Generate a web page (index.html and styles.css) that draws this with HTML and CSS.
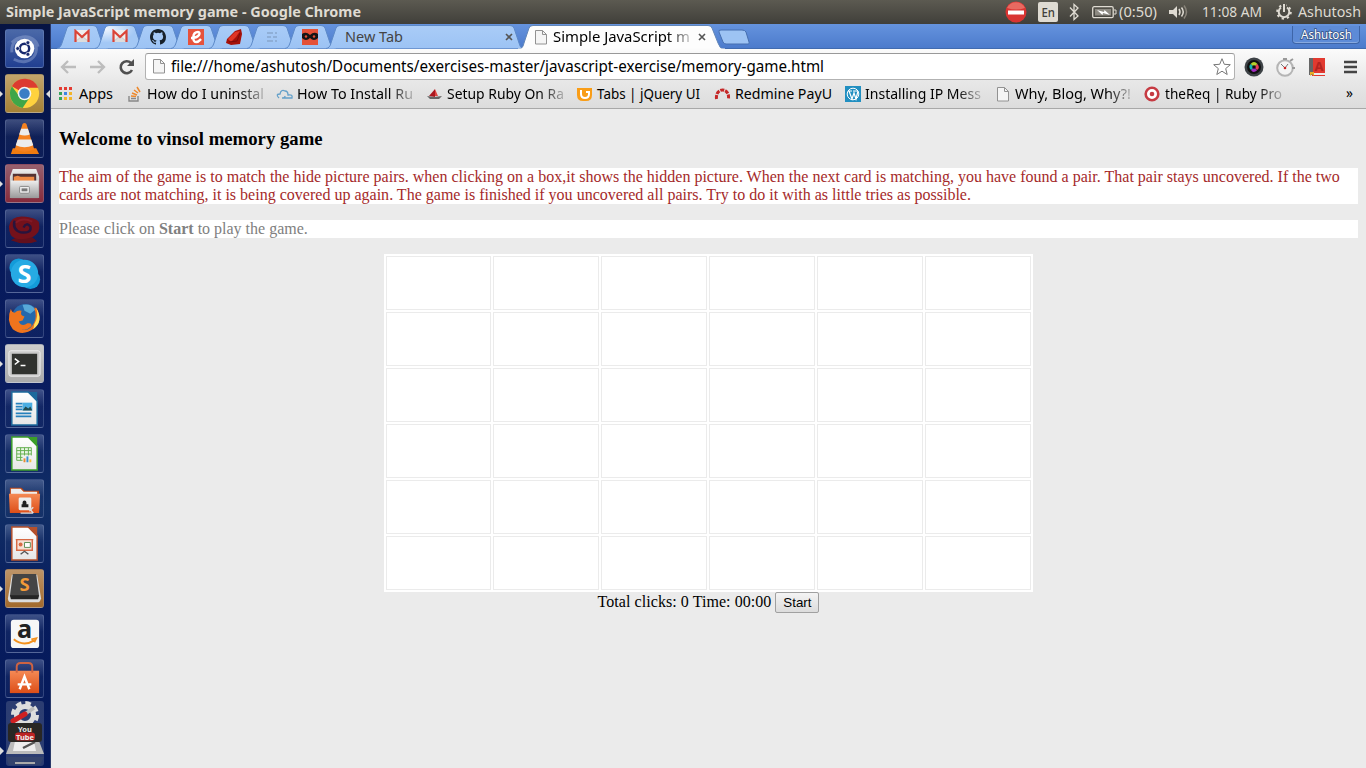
FILE: index.html
```html
<!DOCTYPE html>
<html lang="en">
<head>
<meta charset="utf-8">
<title>Simple JavaScript memory game</title>
<link rel="stylesheet" href="styles.css">
</head>
<body>
<svg width="0" height="0" class="defs">
  <defs>
    <linearGradient id="tabFill" x1="0" y1="0" x2="0" y2="1"><stop offset="0" stop-color="#aaccf7"/><stop offset="1" stop-color="#9cc3f4"/></linearGradient>
    <radialGradient id="litFill" cx=".2" cy=".15" r=".6"><stop offset="0" stop-color="#f0f6fe"/><stop offset="1" stop-color="#a3c8f5"/></radialGradient>
    <linearGradient id="pageFill" x1="0" y1="0" x2="0" y2="1"><stop offset="0" stop-color="#fff"/><stop offset="1" stop-color="#e6e6e6"/></linearGradient>
    <linearGradient id="orangeFill" x1="0" y1="0" x2="0" y2="1"><stop offset="0" stop-color="#f58a55"/><stop offset="1" stop-color="#dd4e18"/></linearGradient>
    <linearGradient id="greyFill" x1="0" y1="0" x2="0" y2="1"><stop offset="0" stop-color="#eee"/><stop offset="1" stop-color="#999"/></linearGradient>
    <symbol id="tab" viewBox="0 0 52 25"><path d="M0 24.500C3 24 4 22 5 19L10 4Q11 1.500 14 1.500H36Q39 1.500 40 4L45 19Q47 24 51 24.500" stroke="#5d8ac9"/></symbol>
    <symbol id="page" viewBox="0 0 12 15"><path d="M.5.5h7l4 4v9.500H.5z" fill="#f5f5f5" stroke="#929292"/><path d="M7.500.5v4h4" fill="none" stroke="#929292"/></symbol>
    <symbol id="gmail" viewBox="0 0 16 14"><path d="M1 1h14v12H1z" fill="#eee"/><path d="M1 13l7-6 7 6" fill="#ddd" stroke="#c8c8c8"/><path d="M1.500 13V2L8 8l6.500-6v11" fill="none" stroke="#db4437" stroke-width="2.200"/></symbol>
    <symbol id="doc" viewBox="0 0 28 36"><path d="M1 1h17l9 9v25H1z" fill="url(#pageFill)" stroke="currentColor" stroke-width="1.500"/><path d="M17 1h10v10z" fill="currentColor"/></symbol>
  </defs>
</svg>

<header class="panel">
  <svg width="356" height="24"><text class="title" x="0" y="17" textLength="355" lengthAdjust="spacingAndGlyphs">Simple JavaScript memory game - Google Chrome</text></svg>
  <div class="tray">
    <svg width="22" height="24"><circle cx="11" cy="12" r="10.500" fill="#d93432"/><path d="M2 8a10 10 0 0 1 18 0Q11 11 2 8" fill="#e86a61"/><rect x="3" y="10.500" width="16" height="4" fill="#fff"/></svg>
    <svg width="20" height="24"><rect y="2" width="20" height="20" rx="2" fill="#dfdbd2"/><text x="3.500" y="17" class="lang" textLength="13.500" lengthAdjust="spacingAndGlyphs">En</text></svg>
    <svg width="11" height="24"><path d="M1 7.500l8 8.500-4 3.500v-15L9 8l-8 8.500" fill="none" stroke="#dfdbd2" stroke-width="1.300"/></svg>
    <svg width="25" height="24"><rect x=".7" y="6.700" width="20.500" height="11" rx="1.500" fill="none" stroke="#dfdbd2" stroke-width="1.300"/><rect x="3" y="9" width="16" height="6.500" fill="#8d8a82"/><path d="M22 10h2v4h-2" fill="none" stroke="#dfdbd2"/><path d="M5 10l7 2 .5-2 5.500 5-7-2-.5 2z" fill="#fff"/></svg>
    <svg width="39" height="24"><text y="17" class="paneltext" textLength="38" lengthAdjust="spacingAndGlyphs">(0:50)</text></svg>
    <svg width="21" height="24"><path d="M1 10h4l4-4v12l-4-4H1z" fill="#dfdbd2"/><path d="M11 9q2 3 0 6M13.500 7.500q3.500 4.500 0 9" fill="none" stroke="#dfdbd2" stroke-width="1.500"/><path d="M16 5.500q5 6.500 0 13" fill="none" stroke="#888379" stroke-width="1.500"/></svg>
    <svg width="61" height="24"><text y="17" class="paneltext" textLength="60" lengthAdjust="spacingAndGlyphs">11:08 AM</text></svg>
    <svg width="16" height="24"><path d="M5 7.500a5.300 5.300 0 1 0 6 0" fill="none" stroke="#dfdbd2" stroke-width="2"/><circle cx="8" cy="12" r="6.800" fill="none" stroke="#dfdbd2" stroke-width="2" stroke-dasharray="2.300 3.040"/><path d="M8 4v8" stroke="#504e47" stroke-width="4"/><path d="M8 4v8" stroke="#dfdbd2" stroke-width="2"/></svg>
    <svg width="64" height="24"><text y="17" class="paneltext" textLength="63" lengthAdjust="spacingAndGlyphs">Ashutosh</text></svg>
  </div>
</header>

<div class="desktop">
<nav class="launcher">
  <div class="app dash"><svg viewBox="0 0 38 38"><path d="M6 23C4 5 29 1 33 17M8 30c18 9 29-8 20-20M6 13C14 4 28 5 31 22" fill="none" stroke="#a5b7df" stroke-width="3" opacity=".4"/><circle cx="19" cy="19" r="10" fill="#fff"/><circle cx="19" cy="19" r="4.800" fill="none" stroke="#17296e" stroke-width="2.500"/><g fill="#17296e" stroke="#fff" stroke-width=".7"><circle cx="12" cy="19" r="2"/><circle cx="22.500" cy="13" r="2"/><circle cx="22.500" cy="25" r="2"/></g></svg></div>
  <div class="app chrome run focus"><svg viewBox="0 0 38 38"><circle cx="19" cy="19" r="15" fill="#ffd23e"/><path d="M19 19L6 11.500A15 15 0 0 1 33 13H19z" fill="#dc3b30"/><path d="M19 19l-5 3L6 11.500A15 15 0 0 0 17 33.800L25 22z" fill="#3fa648"/><circle cx="19" cy="19" r="7" fill="#f4f4f4"/><circle cx="19" cy="19" r="5.400" fill="#3b7dc5"/></svg></div>
  <div class="app"><svg viewBox="0 0 38 38"><path d="M7 29h24l3 6H5z" fill="#f07c10"/><path d="M17 4q2-2 4 0l8 26q-10 5-20 0z" fill="#f58220"/><path d="M15.500 9h7l2 6q-5 2-11 0zM12 20h14l2 6q-9 4-18 0z" fill="#ececec"/></svg></div>
  <div class="app files run"><svg viewBox="0 0 38 38"><path d="M7 4h24l3 8v22H4V12z" fill="url(#greyFill)"/><path d="M7 9h24v8H7z" fill="#533"/><path d="M8 12l4-1 3 1h14v5H8z" fill="#f08b45"/><path d="M5 16h28v18H5z" fill="url(#greyFill)"/><rect x="14" y="22" width="10" height="7" rx="1" fill="#eee" stroke="#888"/><rect x="16" y="24" width="6" height="3" fill="#777"/></svg></div>
  <div class="app"><svg viewBox="0 0 38 38"><path d="M5 31q14 6 27 1l-5-4H11z" fill="#62101d"/><path d="M3 17Q5 5 20 7t14 8q2 8-7 13-16 5-22-2-2-4-2-9z" fill="#74111b"/><path d="M9 11q-3 9 6 12 12 1 10-6-4-5-7 1" fill="none" stroke="#28143d" stroke-width="2.500"/><path d="M10 13q7-6 17-1" fill="none" stroke="#841926" stroke-width="2"/></svg></div>
  <div class="app"><svg viewBox="0 0 38 38"><circle cx="13" cy="13" r="9.500" fill="#139bd9"/><circle cx="25" cy="25" r="10" fill="#139bd9"/><circle cx="19" cy="19" r="14" fill="#26aae4"/><text x="19" y="28.500" class="skype">S</text></svg></div>
  <div class="app"><svg viewBox="0 0 38 38"><circle cx="20" cy="18" r="14" fill="#2568ac"/><path d="M17 5q9-2 13 5l-5 4-6-3z" fill="#58a9d8"/><path d="M31 8q8 13-2 21-12 9-22 1-7-9-2-21 1 4 4 4 3-3 7-2-2 5 3 6l-2 4-4 1q3 6 9 2 5-1 4 3-6 6-13 1 10 7 16-5 3-6 0-15z" fill="#ef741d"/><path d="M31 8q8 14-3 22l1-5q5-8 2-17" fill="#ffe25e"/></svg></div>
  <div class="app terminal run"><svg viewBox="0 0 38 38"><rect x="3" y="6" width="32" height="26" rx="2" fill="#c9c9c9" stroke="#eee"/><rect x="6" y="9" width="26" height="21" fill="#30322f"/><path d="M9 14l4 3-4 3M15 21h5" fill="none" stroke="#fff" stroke-width="1.500"/></svg></div>
  <div class="app"><svg viewBox="0 0 38 38"><use href="#doc" x="5" y="1" width="28" height="36" color="#1d699c"/><path d="M10 14h7M10 17h7M10 20h7M10 24h16M10 27h16" stroke="#2681bd" stroke-width="1.800"/><path d="M17 13h10v8H17z" fill="#4baee2"/><path d="M17 21l3-4 3 2 2-2 2 4z" fill="#224c50"/></svg></div>
  <div class="app"><svg viewBox="0 0 38 38"><use href="#doc" x="5" y="1" width="28" height="36" color="#3b9f28"/><path d="M11 13h15v13H11zM11 16h15M11 19.500h15M11 23h15M15 13v13M19 13v13M23 13v13" fill="#eaf6e5" stroke="#65af50"/><path d="M17 21h10v8H17z" fill="#eee"/><path d="M18 24h2v4h-2z" fill="#e78a32"/><path d="M21 22h2v6h-2z" fill="#3c91cf"/><path d="M24 25h2v3h-2z" fill="#f5c03d"/></svg></div>
  <div class="app"><svg viewBox="0 0 38 38"><path d="M4 8h12l3 3h15v20H4z" fill="#b94314"/><path d="M5 9h10l3 3h14v5H5z" fill="#eee"/><path d="M3 14h32l-1 20H4z" fill="url(#orangeFill)"/><rect x="13" y="18" width="13" height="13" rx="1.500" fill="#eee"/><path d="M17 25v-2q0-2 2-2t2 2v2zM16 25h7v3h-7z" fill="#222"/><path d="M15 34h13m-4-5l4 5m0-6l-4 4" stroke="#ddd" stroke-width="1.500"/></svg></div>
  <div class="app"><svg viewBox="0 0 38 38"><use href="#doc" x="5" y="1" width="28" height="36" color="#b5502b"/><path d="M11 15h16v11H11zM10 15h18" fill="#f6dfd4" stroke="#d76a44" stroke-width="1.500"/><path d="M15 30l4-3 4 3" fill="none" stroke="#555" stroke-width="1.500"/><circle cx="15" cy="20" r="2" fill="#d76a44"/><path d="M19 18h6v5h-6z" fill="#fff" stroke="#5b8e55"/></svg></div>
  <div class="app sublime run"><svg viewBox="0 0 38 38"><path d="M6 5h26l4 24q-1 4-3 4H5q-3 0-3-4z" fill="#ddd"/><path d="M7 4h24l3 23H4z" fill="#454545"/><path d="M4 26h30l-1 4H5z" fill="#252525"/><text x="19" y="22" class="subl">S</text></svg></div>
  <div class="app"><svg viewBox="0 0 38 38"><rect x="5" y="5" width="29" height="29" rx="3" fill="#f7f7f7"/><text x="19" y="24" class="amazon">a</text><path d="M8 25q10 8 21 1M26 25l5-1-2 4" fill="none" stroke="#f4921e" stroke-width="2"/></svg></div>
  <div class="app"><svg viewBox="0 0 38 38"><path d="M4 11h30v23H4z" fill="url(#orangeFill)"/><path d="M11 13V7q0-4 4-4h8q4 0 4 4v6" fill="none" stroke="#ce6342" stroke-width="2"/><path d="M14 30l5-13 5 13M12 25h14" fill="none" stroke="#fff" stroke-width="2.500"/></svg></div>
  <svg class="stack" viewBox="0 0 50 67"><rect x="6" y="0" width="38" height="65" rx="3" fill="#40507e" opacity=".65"/><circle cx="25" cy="14" r="12" fill="none" stroke="#ddd" stroke-width="4" stroke-dasharray="5.500 3.920"/><circle cx="25" cy="14" r="8.500" fill="none" stroke="#ddd" stroke-width="5"/><path d="M14 20L34 7" stroke="#b9b9b9" stroke-width="3.500"/><path d="M13 20L25 13" stroke="#cf2021" stroke-width="5" stroke-linecap="round"/><path d="M11 40h28l5 13H6z" fill="#bbb"/><path d="M15 40h19l2 10H13z" fill="#eee"/><path d="M23 47l12-6" stroke="#555" stroke-width="2.500"/><rect x="8" y="22" width="34" height="19" rx="3" fill="#292724"/><text x="25" y="30.500" class="yt">You</text><rect x="15" y="31.500" width="20" height="8" rx="3" fill="#bc2424"/><text x="25" y="38.500" class="yt">Tube</text><path d="M6 56h38l-4 8H9z" fill="#34436d"/><path d="M15 61h20v2H15z" fill="#aaa"/><path d="M0 46l4 4-4 4z" fill="#ddd"/></svg>
</nav>

<div class="browser">
  <div class="tabs">
    <div class="tab"><svg class="shape"><use href="#tab" width="52" height="25"/></svg><svg class="fav"><use href="#gmail" width="16" height="14"/></svg></div>
    <div class="tab lit"><svg class="shape"><use href="#tab" width="52" height="25"/></svg><svg class="fav"><use href="#gmail" width="16" height="14"/></svg></div>
    <div class="tab"><svg class="shape"><use href="#tab" width="52" height="25"/></svg><svg class="fav" viewBox="0 0 16 16"><path fill="#17212b" d="M8 0C3.580 0 0 3.580 0 8c0 3.540 2.290 6.530 5.470 7.590.4.070.55-.17.55-.38v-1.490c-2.010.37-2.530-.49-2.690-.94-.09-.23-.48-.94-.82-1.130-.28-.15-.68-.52-.01-.53.63-.01 1.080.58 1.230.82.72 1.210 1.870.87 2.330.66.07-.52.28-.87.51-1.070-1.780-.2-3.640-.89-3.640-3.950 0-.87.31-1.590.82-2.150-.08-.2-.36-1.020.08-2.120 0 0 .67-.21 2.200.82a7.420 7.420 0 0 1 4 0c1.530-1.040 2.200-.82 2.200-.82.44 1.100.16 1.920.08 2.120.51.56.82 1.270.82 2.150 0 3.070-1.870 3.750-3.650 3.950.29.25.54.73.54 1.480v2.200c0 .21.15.46.55.38A8 8 0 0 0 16 8c0-4.420-3.580-8-8-8"/></svg></div>
    <div class="tab"><svg class="shape"><use href="#tab" width="52" height="25"/></svg><svg class="fav" viewBox="0 0 16 16"><rect width="16" height="16" fill="#e6523d"/><path d="M3 9c9 0 10-6 7-6-6 0-6 10-2 10 3 0 4-2 5-3" fill="none" stroke="#fff" stroke-width="2.400"/></svg></div>
    <div class="tab"><svg class="shape"><use href="#tab" width="52" height="25"/></svg><svg class="fav" viewBox="0 0 16 16"><path d="M1 10l8-8 6-2 1 5-2 10-9 1-5-2z" fill="#a51109"/><path d="M2 10l7-7 5-1-4 6-5 5z" fill="#df3526"/><path d="M3 13l8-1 3-8" fill="none" stroke="#7c0b0b"/></svg></div>
    <div class="tab"><svg class="shape"><use href="#tab" width="52" height="25"/></svg><svg class="fav" viewBox="0 0 16 16"><path d="M3 4h6M11 4h2M3 8h4M9 8h4M3 12h6M11 12h2" stroke="#88a7cd" stroke-width="1.500"/></svg></div>
    <div class="tab"><svg class="shape"><use href="#tab" width="52" height="25"/></svg><svg class="fav" viewBox="0 0 16 16"><rect width="16" height="16" fill="#e45037"/><path d="M0 5q4-3 8 1 4-4 8-1v4q-4 4-8 0-4 4-8 0z" fill="#151515"/><circle cx="4" cy="7.500" r="1.200" fill="#e45037"/><circle cx="12" cy="7.500" r="1.200" fill="#e45037"/></svg></div>
    <div class="tab wide"><svg class="shape"><path d="M4 24.500Q8 24 9 19L14 4Q15 1.500 18 1.500H188Q191 1.500 192 4l5 15q1 5 4 5.500" stroke="#5d8ac9"/></svg><svg width="59" height="24"><text y="17" class="tabtext dim" textLength="58" lengthAdjust="spacingAndGlyphs">New Tab</text></svg><svg class="close" viewBox="0 0 8 8"><path d="M1 1l6 6M7 1L1 7" stroke="#555" stroke-width="1.600"/></svg></div>
    <div class="tab active"><svg class="shape" width="208" height="26"><path d="M0 25.500Q5 25 6 19L11 4Q12 1.500 15 1.500H190Q193 1.500 194 4l6 15q2 6 6 6.500" fill="#fdfdfd" stroke="#6286b8"/><path d="M0 25.500h207" stroke="#fbfbfb" stroke-width="2"/></svg><svg width="12" height="15"><use href="#page" width="12" height="15"/></svg><svg class="fade" width="138" height="24"><text y="17" class="tabtext" textLength="137" lengthAdjust="spacingAndGlyphs">Simple JavaScript m</text></svg><svg class="close" viewBox="0 0 8 8"><path d="M1 1l6 6M7 1L1 7" stroke="#555" stroke-width="1.600"/></svg></div>
    <svg class="plus" width="33" height="17"><path d="M1 3Q0 1 3 1h21q3 0 4 2l3 10q1 2-1 2H8q-2 0-3-2z" fill="#9dc3f3" stroke="#466fb0"/></svg>
    <div class="profile"><svg width="52" height="18"><text y="13" class="proftext" textLength="51" lengthAdjust="spacingAndGlyphs">Ashutosh</text></svg></div>
  </div>

  <div class="toolbar">
    <svg width="17" height="18"><path d="M8 3L2 9l6 6M2 9h14" fill="none" stroke="#bdbdbd" stroke-width="2.300"/></svg>
    <svg width="17" height="18"><path d="M9 3l6 6-6 6M15 9H1" fill="none" stroke="#bdbdbd" stroke-width="2.300"/></svg>
    <svg width="17" height="18"><path d="M13 5a6 6 0 1 0 1 7" fill="none" stroke="#505050" stroke-width="2.600"/><path d="M16 1v7H9z" fill="#505050"/></svg>
    <div class="omnibox">
      <svg width="12" height="15"><use href="#page" width="12" height="15"/></svg>
      <svg width="655" height="24"><text y="17" class="url" textLength="653" lengthAdjust="spacingAndGlyphs">file:///home/ashutosh/Documents/exercises-master/javascript-exercise/memory-game.html</text></svg>
      <svg class="star" width="18" height="18"><path d="M9 .7l2.300 5.600 6 .4-4.600 3.900 1.500 5.900L9 13.200l-5.200 3.300 1.500-5.900L.7 6.700l6-.4z" fill="#fff" stroke="#777"/></svg>
    </div>
    <svg width="20" height="20"><circle cx="10" cy="10" r="9.500" fill="#3d4246"/><circle cx="10" cy="10" r="7" fill="#111"/><path d="M10 10L6.500 7q3.500-4 7 0z" fill="#b6d22c"/><path d="M10 10l3.500-3q3 4-.5 6z" fill="#e83f5c"/><path d="M10 10l3 3.500q-4 3-6-.5z" fill="#a22bc1"/><path d="M10 10l-3 3q-3-3-.5-6z" fill="#18b3b4"/><circle cx="10" cy="10" r="1.800" fill="#111"/></svg>
    <svg width="20" height="20"><circle cx="9" cy="11" r="7.800" fill="#f4f4f4" stroke="#b5b5b5" stroke-width="2"/><path d="M14 4l3-2M16 11h3M7 2h4" stroke="#999" stroke-width="2"/><path d="M9 11L5 7M9 11l3-4" fill="none" stroke="#777"/><circle cx="9" cy="11" r="1.300" fill="#c22"/></svg>
    <svg width="17" height="20"><path d="M0 1h4v17H0z" fill="#666"/><path d="M4 1h12v15H4zM3 18h13v1H3z" fill="#e23a30"/><text x="10" y="14" class="book">A</text><path d="M1 15h4v4l-2-2-2 2z" fill="#e7ac24"/></svg>
    <svg width="13" height="14"><path d="M0 2h13M0 7h13M0 12h13" stroke="#454545" stroke-width="2.600"/></svg>
  </div>

  <div class="bookmarks">
    <div class="bm"><svg class="bi" viewBox="0 0 16 16"><path d="M0 1h3v3H0zM5 1h3v3H5zM10 1h3v3h-3z" fill="#e33b32"/><path d="M0 6h3v3H0z" fill="#34a35a"/><path d="M5 6h3v3H5z" fill="#3c84e4"/><path d="M10 6h3v3h-3zM5 11h3v3H5zM10 11h3v3h-3z" fill="#f3b529"/><path d="M0 11h3v3H0z" fill="#34a35a"/></svg><svg width="34" height="24"><text y="17" textLength="34" lengthAdjust="spacingAndGlyphs">Apps</text></svg></div>
    <div class="bm"><svg class="bi" viewBox="0 0 16 16"><path d="M2 10v5h9v-5M4 12.500h5" fill="none" stroke="#888" stroke-width="1.400"/><path d="M4 10l5 .5M5 7l5 2M7 4l4 3M10 1l3 5" stroke="#ed892d" stroke-width="1.500"/></svg><svg class="fade" width="117" height="24"><text y="17" textLength="117" lengthAdjust="spacingAndGlyphs">How do I uninstal</text></svg></div>
    <div class="bm"><svg class="bi" viewBox="0 0 16 16"><path d="M2 12Q-2 8 3 8q1-5 5-3 3 0 3 4 5-1 4 3H5q3 0 3-2" fill="none" stroke="#64a0c9" stroke-width="1.300"/></svg><svg class="fade" width="116" height="24"><text y="17" textLength="116" lengthAdjust="spacingAndGlyphs">How To Install Ru</text></svg></div>
    <div class="bm"><svg class="bi" viewBox="0 0 16 16"><path d="M2 10L8 3v8z" fill="#aa1820"/><path d="M8 3l3 7H8z" fill="#df4541"/><path d="M0 10l7 1 8-1-3 3H3z" fill="#666"/></svg><svg class="fade" width="117" height="24"><text y="17" textLength="117" lengthAdjust="spacingAndGlyphs">Setup Ruby On Ra</text></svg></div>
    <div class="bm"><svg class="bi" viewBox="0 0 16 16"><path d="M0 2h15v7q0 6-6 6H6q-6 0-6-6z" fill="#f99d17"/><path d="M4 4v4q0 4 4 4t4-4V6H9" fill="none" stroke="#fff" stroke-width="2"/></svg><svg width="103" height="24"><text y="17" textLength="103" lengthAdjust="spacingAndGlyphs">Tabs | jQuery UI</text></svg></div>
    <div class="bm"><svg class="bi" viewBox="0 0 16 16"><path d="M1.500 13C0 1 15 1 13.500 13" fill="none" stroke="#c52727" stroke-width="3" stroke-dasharray="4 1"/></svg><svg width="97" height="24"><text y="17" textLength="97" lengthAdjust="spacingAndGlyphs">Redmine PayU</text></svg></div>
    <div class="bm"><svg class="bi" viewBox="0 0 16 16"><rect width="16" height="16" fill="#218fc1"/><circle cx="8" cy="8" r="5.800" fill="none" stroke="#fff"/><path d="M4 5l3 8 2-6 2 6 2-8M3 5h4M8 5h4" fill="none" stroke="#fff" stroke-width="1.200"/></svg><svg class="fade" width="116" height="24"><text y="17" textLength="116" lengthAdjust="spacingAndGlyphs">Installing IP Mess</text></svg></div>
    <div class="bm"><svg class="bi" viewBox="0 0 16 16"><use href="#page" x="2" y="1" width="12" height="15"/></svg><svg class="fade" width="116" height="24"><text y="17" textLength="116" lengthAdjust="spacingAndGlyphs">Why, Blog, Why?!</text></svg></div>
    <div class="bm"><svg class="bi" viewBox="0 0 16 16"><circle cx="7" cy="8" r="6.300" fill="#fff" stroke="#c63b43" stroke-width="2.600"/><circle cx="7" cy="8" r="2.300" fill="#c63b43"/></svg><svg class="fade" width="117" height="24"><text y="17" textLength="117" lengthAdjust="spacingAndGlyphs">theReq | Ruby Pro</text></svg></div>
    <svg class="more" width="8" height="24"><text y="16" textLength="7" lengthAdjust="spacingAndGlyphs">»</text></svg>
  </div>

  <main class="page">
    <h3>Welcome to vinsol memory game</h3>
    <p class="rules">The aim of the game is to match the hide picture pairs. when clicking on a box,it shows the hidden picture. When the next card is matching, you have found a pair. That pair stays uncovered. If the two cards are not matching, it is being covered up again. The game is finished if you uncovered all pairs. Try to do it with as little tries as possible.</p>
    <p class="hint">Please click on <b>Start</b> to play the game.</p>
    <div class="board">
      <i></i><i></i><i></i><i></i><i></i><i></i>
      <i></i><i></i><i></i><i></i><i></i><i></i>
      <i></i><i></i><i></i><i></i><i></i><i></i>
      <i></i><i></i><i></i><i></i><i></i><i></i>
      <i></i><i></i><i></i><i></i><i></i><i></i>
      <i></i><i></i><i></i><i></i><i></i><i></i>
    </div>
    <div class="status"><span>Total clicks: 0 Time: 00:00</span><button>Start</button></div>
  </main>
</div>
</div>
</body>
</html>
```
FILE: styles.css
```css
* { box-sizing: border-box; }
html, body { margin: 0; height: 768px; overflow: hidden; }
body { background: #ebebeb; font-family: "Liberation Serif", serif; font-size: 16px; }
svg { display: block; flex: none; overflow: visible; }
svg text { font-family: "Noto Sans", sans-serif; font-size: 14px; }
.defs { position: absolute; }

/* Desktop panel */
.panel { height: 24px; padding-left: 6px; display: flex; justify-content: space-between; background: linear-gradient(#5c5a51, #403f3a); }
.panel text { fill: #dfdbd2; }
.panel .title { font-weight: 700; font-size: 13.5px; }
.panel .lang { fill: #403f3a; font-size: 13px; font-weight: 500; }
.tray { display: grid; grid-template-columns: 33px 31px 23px 27px 49px 34px 74px 22px 68px; }

.desktop { display: flex; height: 744px; }

/* Launcher */
.launcher { width: 51px; height: 744px; flex: none; display: flex; flex-direction: column; align-items: center; gap: 6px; padding: 5px 1px 0 0; overflow: hidden; border-right: 1px solid #293969; background: linear-gradient(#071443, #06195a 28%, #0a1d60 50%, #112f66 65%, #071c5d 78%, #05195b); }
.app { position: relative; width: 39px; height: 39px; flex: none; border-radius: 3px; border: 1px solid rgba(160, 175, 210, .25); background: linear-gradient(rgba(160, 175, 210, .36), rgba(60, 80, 130, .18) 45%, rgba(60, 80, 130, .12)); }
.app svg { width: 37px; height: 37px; }
.dash { background: linear-gradient(#4b69a8, #213f91); }
.chrome { background: linear-gradient(#c2a46b, #a58135); }
.files { background: linear-gradient(#97606e, #862b3c); }
.terminal { background: linear-gradient(#ccc, #aaa); }
.sublime { background: linear-gradient(#bd9468, #a36a2c); }
.run::before, .focus::after { content: ""; position: absolute; top: 15px; border: 4px solid transparent; }
.run::before { left: -7px; border-left-color: #ddd; border-right: 0; }
.focus::after { right: -7px; border-right-color: #ddd; border-left: 0; }
.launcher text { text-anchor: middle; font-weight: 700; }
.launcher .skype { font-size: 26px; fill: #fff; }
.launcher .subl { font-size: 19px; fill: #f29a38; }
.launcher .amazon { font-size: 26px; fill: #222; }
.launcher .yt { font-size: 7.500px; fill: #eee; }
.stack { width: 50px; height: 67px; margin-top: -3px; }

/* Browser frame */
.browser { flex: 1; min-width: 0; }
.tabs { height: 25px; display: flex; padding-left: 8px; background: linear-gradient(#6593de, #4b7acb); box-shadow: inset 0 -1px #416baf; }
.tab { position: relative; width: 38px; height: 25px; flex: none; display: flex; align-items: center; padding-left: 15px; }
.shape { position: absolute; left: -2px; top: 0; width: 52px; height: 25px; fill: url(#tabFill); }
.lit .shape { fill: url(#litFill); }
.fav { position: relative; width: 16px; height: 16px; }
.wide { width: 193px; padding: 0 5px 0 20px; }
.wide .shape { left: -3px; width: 200px; }
.wide .close { margin-left: auto; }
.wide > svg:not(.shape), .active > svg:not(.shape) { position: relative; }
.active { width: 201px; padding-left: 17px; height: 26px; z-index: 2; }
.active .shape { left: 0; width: 208px; height: 26px; }
.active .fade { margin-left: 6px; }
.close { width: 8px; height: 8px; margin-left: 7px; }
.dim { fill: #444; }
.plus { margin: 5px 0 0 -1px; }
.profile { width: 68px; height: 18px; margin: 2px 6px 0 auto; padding-left: 8px; border: 1px solid #3e65a8; border-top: 0; border-radius: 0 0 4px 4px; background: #5d8bd7; box-shadow: inset 0 -1px #87a9df; }
.profile .proftext { fill: #fff; font-size: 12px; paint-order: stroke; stroke: #334f80; stroke-width: 1.5px; }
.fade { -webkit-mask-image: linear-gradient(90deg, #000 calc(100% - 24px), rgba(0,0,0,.2)); mask-image: linear-gradient(90deg, #000 calc(100% - 24px), rgba(0,0,0,.2)); }

.toolbar { height: 31px; display: grid; grid-template-columns: 29px 29px 27px 1099px 32px 33px 35px 13px; padding: 4px 0 0 9px; align-items: center; background: linear-gradient(#fbfbfb, #e9e9e9); }
.omnibox { width: 1090px; height: 27px; display: flex; align-items: center; padding: 0 3px 0 7px; border: 1px solid #b2b2b2; border-top-color: #999; border-radius: 3px; background: #fff; }
.omnibox .url { font-size: 15.5px; }
.omnibox svg + svg { margin-left: 6px; }
.omnibox .star { margin-left: auto; }
.toolbar .book { text-anchor: middle; font-weight: 700; font-size: 13px; fill: #b42420; }

.bookmarks { height: 29px; display: flex; align-items: center; justify-content: space-between; padding: 0 12px 0 8px; background: linear-gradient(#e8e8e8, #dcdcdc); border-bottom: 1px solid #a8a8a8; }
.bookmarks { display: grid; grid-template-columns: 68px 150px 150px 150px 137px 130px 150px 150px 201px 8px; }
.bm { display: flex; align-items: center; gap: 4px; }
.bi { width: 16px; height: 16px; }

/* Memory game page */
.page { padding: 1px 8px 0; height: 659px; background: #ebebeb; }
h3 { margin: 18px 0 19px; font-size: 18.72px; line-height: 21px; letter-spacing: .03px; }
p { margin: 0 0 16px; line-height: 18px; background: #fff; }
.rules { color: #a52a2a; letter-spacing: .009px; }
.hint { color: #808080; }
.board { width: 649px; height: 338px; margin: 0 auto; padding: 2px; display: grid; gap: 2px; grid-template-columns: 105px repeat(5, 106px); grid-template-rows: repeat(6, 54px); background: #fff; }
.board i { border: 1px solid #ebebeb; }
.status { display: flex; justify-content: center; gap: 4px; line-height: 20px; letter-spacing: .06px; }
.status button { width: 44px; height: 21px; padding: 0; font: 13.33px "Liberation Sans", sans-serif; border: 1px solid #a0a0a0; border-radius: 2px; background: linear-gradient(#f4f4f4, #dcdcdc); color: #000; }
```
